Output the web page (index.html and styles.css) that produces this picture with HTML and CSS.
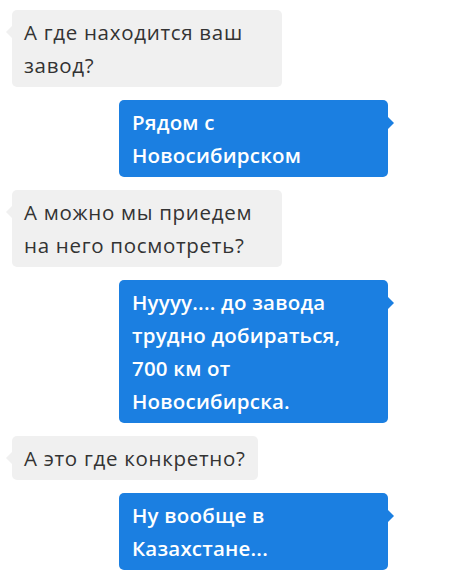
FILE: index.html
```html
<!DOCTYPE html>
<html lang="ru">
<head>
    <meta charset="UTF-8">
    <title>Чат</title>
    <link rel="stylesheet" href="styles.css">
</head>
<body>
    <div class="chat">
        <div class="msg in">А где находится ваш завод?</div>
        <div class="msg out">Рядом с Новосибирском</div>
        <div class="msg in">А можно мы приедем на него посмотреть?</div>
        <div class="msg out">Нуууу.... до завода трудно добираться, 700 км от Новосибирска.</div>
        <div class="msg in">А это где конкретно?</div>
        <div class="msg out">Ну вообще в Казахстане...</div>
    </div>
</body>
</html>
```

FILE: styles.css
```css
body {
    margin: 0;
    background-color: #fff;
    font-family: "Open Sans", "Noto Sans", sans-serif;
}
.chat {
    display: flex;
    flex-direction: column;
    gap: 13px;
    padding: 10px 0 0 0;
}
.msg {
    position: relative;
    box-sizing: border-box;
    max-width: 270px;
    padding: 6px 12px 5px 12px;
    border-radius: 5px;
    font-size: 20.5px;
    line-height: 33px;
}
/* incoming - grey, on the left */
.msg.in {
    align-self: flex-start;
    margin-left: 12px;
    background-color: #f0f0f0;
    color: #333;
    letter-spacing: 0.7px;
}
.msg.in::before {
    content: "";
    position: absolute;
    left: -6px;
    top: 16px;
    border-top: 6px solid transparent;
    border-bottom: 6px solid transparent;
    border-right: 6px solid #f0f0f0;
}
/* outgoing - blue, on the right */
.msg.out {
    align-self: flex-end;
    width: 269px;
    margin-right: 88px;
    padding-left: 13px;
    background-color: #1b7fe1;
    color: #fff;
    font-weight: 600;
    letter-spacing: 0.2px;
}
.msg.out::after {
    content: "";
    position: absolute;
    right: -6px;
    top: 17px;
    border-top: 6px solid transparent;
    border-bottom: 6px solid transparent;
    border-left: 6px solid #1b7fe1;
}
```
